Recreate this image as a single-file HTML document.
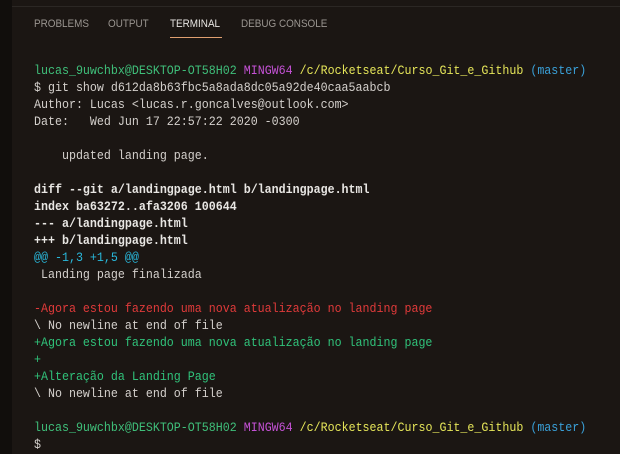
<!DOCTYPE html><html><head><style>
body{margin:0;width:620px;height:454px;background:#1b1613;overflow:hidden;position:relative}
.strip{position:absolute;left:0;top:0;width:12px;height:454px;background:#110e0c}
.topline{position:absolute;left:12px;top:6px;right:0;height:1px;background:#2b2724}
.tabs{position:absolute;top:18px;left:34px;font:11px "Liberation Sans",sans-serif;color:#9a9590}
.tabs span{position:absolute;white-space:nowrap;transform:scaleX(0.9);transform-origin:0 0}
.ul{position:absolute;left:170px;top:37px;width:52px;height:1px;background:#e0a070}
pre{position:absolute;left:34px;top:62px;margin:0;font:13px/17px "Liberation Mono",monospace;color:#d4d0cc;white-space:pre;transform:scaleX(0.896);transform-origin:0 0}
.g{color:#3fbf7a}.m{color:#c552d6}.y{color:#e5e559}.c{color:#3aa0d8}.b{font-weight:bold;color:#e8e6e3}.cy{color:#29b8db}.r{color:#e03a3a}.gr{color:#30c27a}
</style></head><body>
<div class="strip"></div><div class="topline"></div>
<div class="tabs"><span style="left:0">PROBLEMS</span><span style="left:74px">OUTPUT</span><span style="left:136px;color:#e8e6e3">TERMINAL</span><span style="left:207px">DEBUG CONSOLE</span></div>
<div class="ul"></div>
<pre><span class="g">lucas_9uwchbx@DESKTOP-OT58H02</span> <span class="m">MINGW64</span> <span class="y">/c/Rocketseat/Curso_Git_e_Github</span> <span class="c">(master)</span>
$ git show d612da8b63fbc5a8ada8dc05a92de40caa5aabcb
Author: Lucas &lt;lucas.r.goncalves@outlook.com&gt;
Date:   Wed Jun 17 22:57:22 2020 -0300

    updated landing page.

<span class="b">diff --git a/landingpage.html b/landingpage.html</span>
<span class="b">index ba63272..afa3206 100644</span>
<span class="b">--- a/landingpage.html</span>
<span class="b">+++ b/landingpage.html</span>
<span class="cy">@@ -1,3 +1,5 @@</span>
 Landing page finalizada

<span class="r">-Agora estou fazendo uma nova atualização no landing page</span>
\ No newline at end of file
<span class="gr">+Agora estou fazendo uma nova atualização no landing page</span>
<span class="gr">+</span>
<span class="gr">+Alteração da Landing Page</span>
\ No newline at end of file

<span class="g">lucas_9uwchbx@DESKTOP-OT58H02</span> <span class="m">MINGW64</span> <span class="y">/c/Rocketseat/Curso_Git_e_Github</span> <span class="c">(master)</span>
$</pre>
</body></html>
